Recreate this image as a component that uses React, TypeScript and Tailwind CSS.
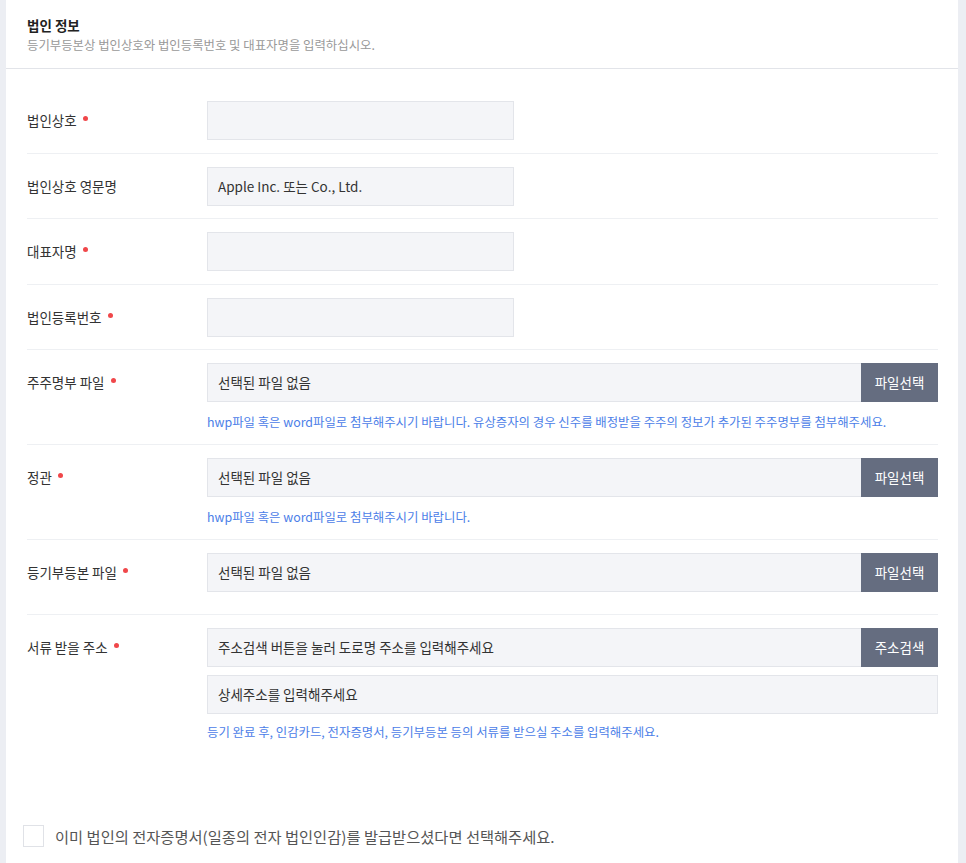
import type { ReactNode } from "react";

const FONT = "font-['Noto_Sans_CJK_KR','Noto_Sans',sans-serif]";

function Required() {
  return <span className="ml-[6px] inline-block h-[5px] w-[5px] -translate-y-[2px] rounded-full bg-[#f0474a]" />;
}

function Field({ children, button }: { children?: ReactNode; button?: string }) {
  return (
    <div className="flex h-[39px] items-stretch border border-[#e3e5ea] bg-[#f4f5f8]">
      <div className="flex flex-1 items-center px-[10px] text-[13.5px] text-[#333]">{children}</div>
      {button ? (
        <div className="-my-px -mr-px flex w-[77px] items-center justify-center bg-[#656d80] text-[13.5px] text-white">
          {button}
        </div>
      ) : null}
    </div>
  );
}

function Help({ children, mt = "mt-[11px]" }: { children: ReactNode; mt?: string }) {
  return <p className={`${mt} text-[12.4px] leading-[18px] text-[#4c80e8]`}>{children}</p>;
}

function Row({
  label,
  required,
  children,
  last,
  pb = "pb-[12.5px]",
}: {
  label: string;
  required?: boolean;
  children: ReactNode;
  last?: boolean;
  pb?: string;
}) {
  return (
    <div className={`flex pt-[13px] ${pb} ${last ? "" : "border-b border-[#eef0f3]"}`}>
      <div className="flex h-[39px] w-[180px] shrink-0 items-center text-[13.5px] text-[#333]">
        {label}
        {required ? <Required /> : null}
      </div>
      <div className="flex-1">{children}</div>
    </div>
  );
}

export default function App() {
  return (
    <div className={`min-h-[863px] bg-[#eceef3] pl-[6px] pr-[8px] ${FONT}`}>
      <div className="min-h-[863px] bg-white">
        <div className="h-[69px] border-b border-[#e2e4e9] px-[21px] pt-[15px]">
          <h2 className="text-[13.5px] font-bold leading-[20px] text-[#222]">법인 정보</h2>
          <p className="mt-[1px] text-[12.4px] leading-[18px] text-[#999]">
            등기부등본상 법인상호와 법인등록번호 및 대표자명을 입력하십시오.
          </p>
        </div>

        <div className="pl-[21px] pr-[20px] pt-[19px]">
          <Row label="법인상호" required>
            <div className="w-[307px]">
              <Field />
            </div>
          </Row>
          <Row label="법인상호 영문명">
            <div className="w-[307px]">
              <Field>Apple Inc. 또는 Co., Ltd.</Field>
            </div>
          </Row>
          <Row label="대표자명" required>
            <div className="w-[307px]">
              <Field />
            </div>
          </Row>
          <Row label="법인등록번호" required>
            <div className="w-[307px]">
              <Field />
            </div>
          </Row>
          <Row label="주주명부 파일" required pb="pb-[13px]">
            <Field button="파일선택">선택된 파일 없음</Field>
            <Help>
              hwp파일 혹은 word파일로 첨부해주시기 바랍니다. 유상증자의 경우 신주를 배정받을 주주의 정보가 추가된
              주주명부를 첨부해주세요.
            </Help>
          </Row>
          <Row label="정관" required pb="pb-[13px]">
            <Field button="파일선택">선택된 파일 없음</Field>
            <Help>hwp파일 혹은 word파일로 첨부해주시기 바랍니다.</Help>
          </Row>
          <Row label="등기부등본 파일" required pb="pb-[22px]">
            <Field button="파일선택">선택된 파일 없음</Field>
          </Row>
          <Row label="서류 받을 주소" required last pb="pb-0">
            <Field button="주소검색">주소검색 버튼을 눌러 도로명 주소를 입력해주세요</Field>
            <div className="mt-[8px]">
              <Field>상세주소를 입력해주세요</Field>
            </div>
            <Help mt="mt-[9px]">
              등기 완료 후, 인감카드, 전자증명서, 등기부등본 등의 서류를 받으실 주소를 입력해주세요.
            </Help>
          </Row>

          <label className="mt-[84px] -ml-[4px] flex items-center gap-[11px]">
            <span className="h-[22px] w-[21px] border border-[#e0e2e7] bg-white" />
            <span className="text-[15.3px] leading-[22px] text-[#555]">
              이미 법인의 전자증명서(일종의 전자 법인인감)를 발급받으셨다면 선택해주세요.
            </span>
          </label>
        </div>
      </div>
    </div>
  );
}
